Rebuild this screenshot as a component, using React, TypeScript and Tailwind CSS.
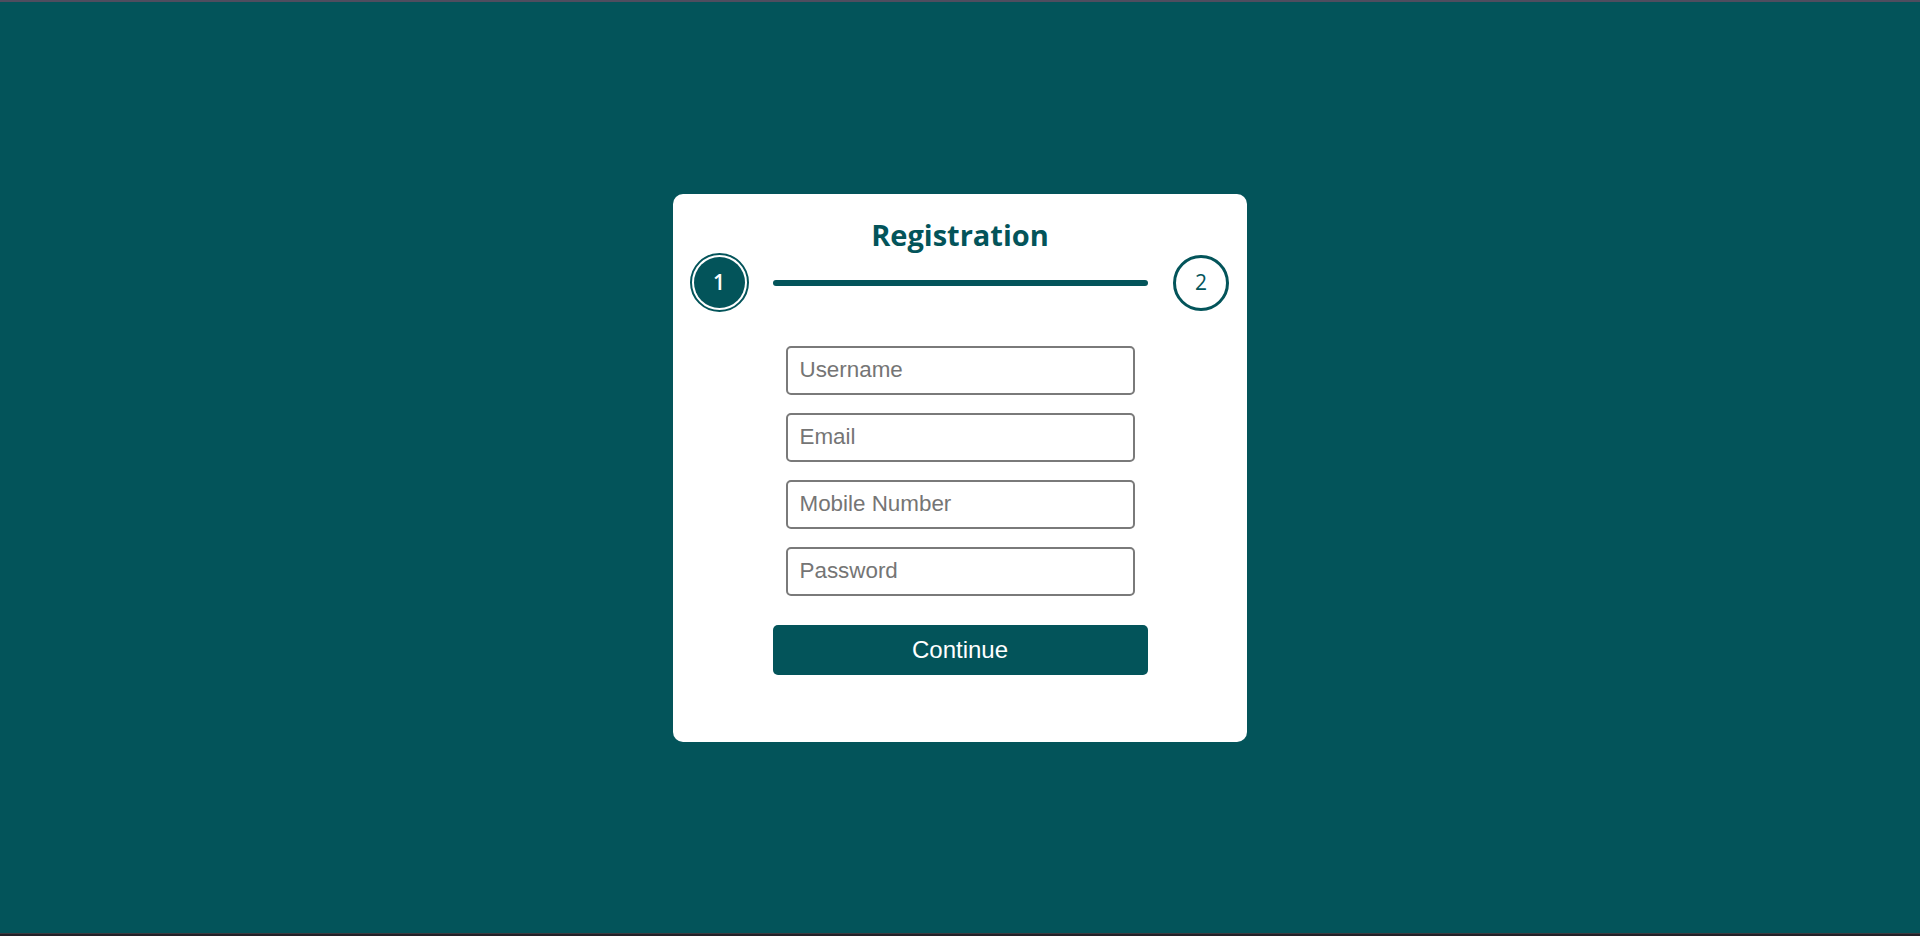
import React from 'react';

const fields = ['Username', 'Email', 'Mobile Number', 'Password'];

const App: React.FC = () => {
    return (
        <div className="flex h-screen w-full flex-col bg-[#03545a]">
            {/* thin browser edge on top */}
            <div className="h-[2px] w-full bg-[#4f4d5f]" />

            <div className="flex flex-1 items-center justify-center">
                <div className="flex w-[574px] flex-col items-center rounded-[10px] bg-white px-[18px] pt-[25.5px] pb-[67px]">
                    <h2 className="text-[29px] leading-[32px] font-bold text-[#03545a] [font-family:'Open_Sans',sans-serif]">
                        Registration
                    </h2>

                    {/* Steps */}
                    <div className="mt-[3.5px] flex h-[56px] w-full items-center justify-between">
                        <div className="flex h-[56px] w-[56px] items-center justify-center">
                            <div className="flex h-[51px] w-[51px] items-center justify-center rounded-full bg-[#03545a] text-[21px] font-semibold text-white outline-2 outline-offset-2 outline-[#03545a] [font-family:'Open_Sans',sans-serif]">
                                1
                            </div>
                        </div>
                        <div className="h-[6px] w-[375px] rounded-full bg-[#03545a]" />
                        <div className="flex h-[56px] w-[56px] items-center justify-center rounded-full border-[3px] border-[#03545a] text-[21px] text-[#03545a] [font-family:'Open_Sans',sans-serif]">
                            2
                        </div>
                    </div>

                    {/* Fields */}
                    <form className="mt-[35px] flex flex-col items-center gap-[18px]" onSubmit={(e) => e.preventDefault()}>
                        {fields.map((f) => (
                            <input
                                key={f}
                                type={f === 'Password' ? 'password' : 'text'}
                                placeholder={f}
                                className="h-[49px] w-[349px] rounded-[5px] border-2 border-[#7a7a7a] bg-white pl-3 text-[22.4px] text-[#333] outline-none placeholder:text-[#757575] [font-family:'Liberation_Sans',Arial,sans-serif]"
                            />
                        ))}
                    </form>

                    <button
                        type="button"
                        className="mt-[29px] h-[50px] w-[375px] rounded-[5px] bg-[#03545a] text-[24px] text-white [font-family:'Liberation_Sans',Arial,sans-serif]"
                    >
                        Continue
                    </button>
                </div>
            </div>

            {/* dark edge at the bottom */}
            <div className="h-[3px] w-full border-t border-[#3a3a40] bg-[#222128]" />
        </div>
    );
};

export default App;
